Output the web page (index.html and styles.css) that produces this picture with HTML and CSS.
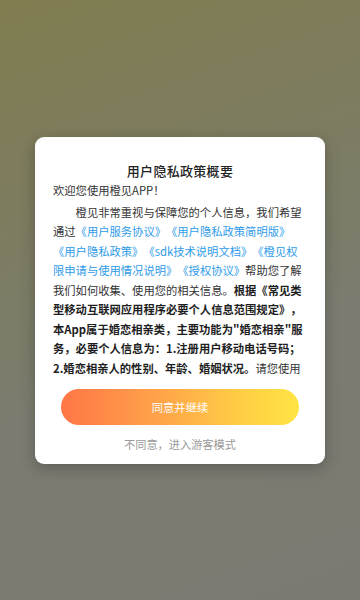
FILE: index.html
```html
<!DOCTYPE html>
<html lang="zh">
<head>
<meta charset="utf-8">
<link rel="stylesheet" href="styles.css">
</head>
<body>
<div class="screen">
  <div class="dialog">
    <div class="title">用户隐私政策概要</div>
    <div class="body">
      <p class="welcome">欢迎您使用橙见APP！</p>
      <p class="para">橙见非常重视与保障您的个人信息，我们希望<br>通过<span class="link">《用户服务协议》</span><span class="link">《用户隐私政策简明版》</span><br><span class="link">《用户隐私政策》</span><span class="link">《sdk技术说明文档》</span><span class="link">《橙见权<br>限申请与使用情况说明》</span><span class="link">《授权协议》</span>帮助您了解<br>我们如何收集、使用您的相关信息。<b>根据《常见类<br>型移动互联网应用程序必要个人信息范围规定》，<br>本App属于婚恋相亲类，主要功能为"婚恋相亲"服<br>务，必要个人信息为：1.注册用户移动电话号码；<br>2.婚恋相亲人的性别、年龄、婚姻状况。</b>请您使用</p>
    </div>
    <div class="agree">同意并继续</div>
    <div class="guest">不同意，进入游客模式</div>
  </div>
</div>
</body>
</html>
```
FILE: styles.css
```css
html, body {
  margin: 0;
  padding: 0;
}
body {
  font-family: "Noto Sans CJK SC", "Noto Sans", sans-serif;
  text-spacing-trim: space-all;
}
.screen {
  width: 360px;
  height: 600px;
  display: flex;
  align-items: center;
  justify-content: center;
  background: linear-gradient(160deg, #7f7c4f 0%, #7d7c62 35%, #7b7b70 60%, #7a7a72 100%);
}
.dialog {
  width: 290px;
  height: 327px;
  box-sizing: border-box;
  background: #fff;
  border-radius: 9px;
  padding: 24px 0 0 18px;
  box-shadow: 0 4px 14px rgba(40, 40, 40, 0.35);
  display: flex;
  flex-direction: column;
}
.title {
  font-size: 13px;
  font-weight: 500;
  color: #222;
  line-height: 20px;
  text-align: center;
  padding-right: 18px;
  letter-spacing: 0.3px;
}
.body {
  width: 256px;
  height: 197px;
  overflow: hidden;
  font-size: 11.3px;
  line-height: 19.5px;
  color: #333;
  white-space: nowrap;
}
.body p {
  margin: 0;
}
.welcome {
  margin-bottom: 2.5px !important;
}
.para {
  text-indent: 2em;
}
.link {
  color: #2f9be8;
}
.body b {
  color: #1e1e1e;
  font-weight: 700;
}
.agree {
  margin: 11px 0 0 8px;
  width: 238px;
  height: 36px;
  border-radius: 18px;
  background: linear-gradient(90deg, #ff7646 0%, #ffa24a 40%, #ffcd45 75%, #ffe443 100%);
  color: #fff;
  font-size: 11.3px;
  display: flex;
  align-items: center;
  justify-content: center;
}
.guest {
  margin-top: 11px;
  padding-right: 18px;
  text-align: center;
  font-size: 11.2px;
  line-height: 17px;
  color: #9a9a9a;
}
```
